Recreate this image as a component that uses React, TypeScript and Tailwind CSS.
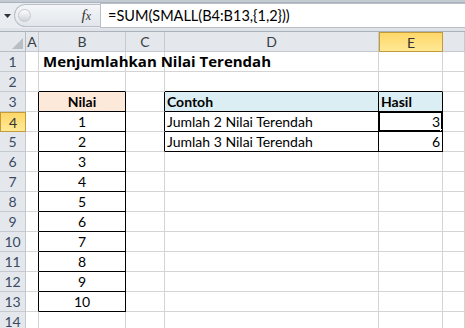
import React from "react";

const COLS = ["26px", "13px", "87px", "39px", "214px", "64px", "1fr"];
const LETTERS = ["A", "B", "C", "D", "E", "F"];
const GRID = "#d4d4d4";
const INK = "#000000";

type Cell = { text?: string; align?: "left" | "center" | "right"; bold?: boolean; bg?: string };

const cells: Record<string, Cell> = {
  "1-2": { text: "Menjumlahkan Nilai Terendah", bold: true },
  "3-2": { text: "Nilai", align: "center", bold: true, bg: "#fde9d9" },
  "3-4": { text: "Contoh", bold: true, bg: "#daeef3" },
  "3-5": { text: "Hasil", bold: true, bg: "#daeef3" },
  "4-4": { text: "Jumlah 2 Nilai Terendah" },
  "4-5": { text: "3", align: "right" },
  "5-4": { text: "Jumlah 3 Nilai Terendah" },
  "5-5": { text: "6", align: "right" },
};
for (let i = 1; i <= 10; i++) cells[`${i + 3}-2`] = { text: String(i), align: "center" };

// which cells sit inside a black-ruled table
const inTable = (r: number, c: number) =>
  (c === 2 && r >= 3 && r <= 13) || ((c === 4 || c === 5) && r >= 3 && r <= 5);

function FormulaBar() {
  return (
    <div className="flex flex-col bg-[#dfe3e8]">
      <div className="h-[3px] bg-[#c4cad1] border-b border-[#aab2bb]" />
      <div className="flex h-[25px] items-stretch">
        <div className="relative w-[100px] flex items-center bg-[#e9ecf0]">
          <svg width="9" height="6" className="ml-[3px]" viewBox="0 0 9 6">
            <path d="M1 1 L8 1 L4.5 5 Z" fill="#333" />
          </svg>
          <div className="ml-[2px] h-[23px] flex-1 rounded-l-full border border-r-0 border-[#b9c0c8] bg-gradient-to-b from-[#f4f6f8] to-[#e2e6eb] flex items-center">
            <div className="ml-[3px] h-[13px] w-[13px] rounded-full bg-gradient-to-b from-[#fdfdfd] to-[#cfd4da] border border-[#c4c9cf]" />
            <span
              className="ml-auto mr-[9px] text-[15px] italic text-[#333]"
              style={{ fontFamily: '"Liberation Serif", serif' }}
            >
              f<span className="text-[12px]">x</span>
            </span>
          </div>
        </div>
        <div className="flex-1 bg-white border-l border-y border-[#b9c0c8] flex items-center pl-[7px] text-[14.5px] text-black">
          =SUM(SMALL(B4:B13,{"{"}1,2{"}"}))
        </div>
      </div>
      <div className="h-[4px] bg-[#dfe3e8] border-b border-[#aab2bb]" />
    </div>
  );
}

function HeaderRow() {
  return (
    <>
      <div className="relative h-[20px] bg-[#e4e7ec] border-r border-b border-[#b5bcc5]">
        <svg className="absolute right-[2px] bottom-[2px]" width="11" height="11" viewBox="0 0 11 11">
          <path d="M11 0 L11 11 L0 11 Z" fill="#b9bec5" />
        </svg>
      </div>
      {LETTERS.map((l) => {
        const sel = l === "E";
        return (
          <div
            key={l}
            className={
              sel
                ? "h-[20px] flex items-center justify-center text-[14px] text-[#333] bg-gradient-to-b from-[#fdd768] to-[#ffe995] border border-[#c29b3c]"
                : "h-[20px] flex items-center justify-center text-[14px] text-[#3a3f46] bg-[#e4e7ec] border-r border-b border-[#c5cad1]"
            }
          >
            {l === "F" ? "" : l}
          </div>
        );
      })}
    </>
  );
}

function Row({ r }: { r: number }) {
  const sel = r === 4;
  return (
    <>
      <div
        className={
          sel
            ? "h-[20px] flex items-center justify-center text-[14px] text-[#333] bg-gradient-to-b from-[#fdd768] to-[#ffe995] border border-[#c29b3c]"
            : "h-[20px] flex items-center justify-center text-[14px] text-[#3b4a63] bg-[#e4e7ec] border-r border-b border-[#c5cad1]"
        }
      >
        {r}
      </div>
      {LETTERS.map((_, i) => {
        const c = i + 1;
        const cell = cells[`${r}-${c}`];
        const rightBlack = inTable(r, c) || inTable(r, c + 1);
        const bottomBlack = inTable(r, c) || inTable(r + 1, c);
        const isTitle = r === 1 && c === 2;
        return (
          <div
            key={c}
            className="relative h-[20px] border-r border-b flex items-center whitespace-nowrap"
            style={{
              borderRightColor: rightBlack ? INK : GRID,
              borderBottomColor: bottomBlack ? INK : GRID,
              background: cell?.bg,
              justifyContent:
                cell?.align === "center" ? "center" : cell?.align === "right" ? "flex-end" : "flex-start",
              overflow: isTitle ? "visible" : "hidden",
              zIndex: isTitle ? 1 : undefined,
            }}
          >
            {cell?.text && (
              <span
                className={
                  isTitle
                    ? "pl-[4px] text-[15px] font-bold text-black"
                    : `px-[2px] text-[14px] text-black ${cell.bold ? "font-bold" : ""}`
                }
                style={isTitle ? { fontFamily: '"Open Sans", sans-serif' } : undefined}
              >
                {cell.text}
              </span>
            )}
            {r === 4 && c === 5 && (
              <>
                <div className="absolute -left-[1px] -top-[1px] -right-[1px] -bottom-[1px] border-2 border-black pointer-events-none" />
                <div className="absolute -right-[4px] -bottom-[4px] w-[6px] h-[6px] bg-black border border-white" />
              </>
            )}
          </div>
        );
      })}
    </>
  );
}

export default function App() {
  const rows = Array.from({ length: 14 }, (_, i) => i + 1);
  return (
    <div
      className="w-[465px] h-[328px] overflow-hidden bg-white"
      style={{ fontFamily: "Lato, 'Liberation Sans', sans-serif" }}
    >
      <FormulaBar />
      <div className="grid" style={{ gridTemplateColumns: COLS.join(" ") }}>
        <HeaderRow />
        {rows.map((r) => (
          <Row key={r} r={r} />
        ))}
      </div>
    </div>
  );
}
